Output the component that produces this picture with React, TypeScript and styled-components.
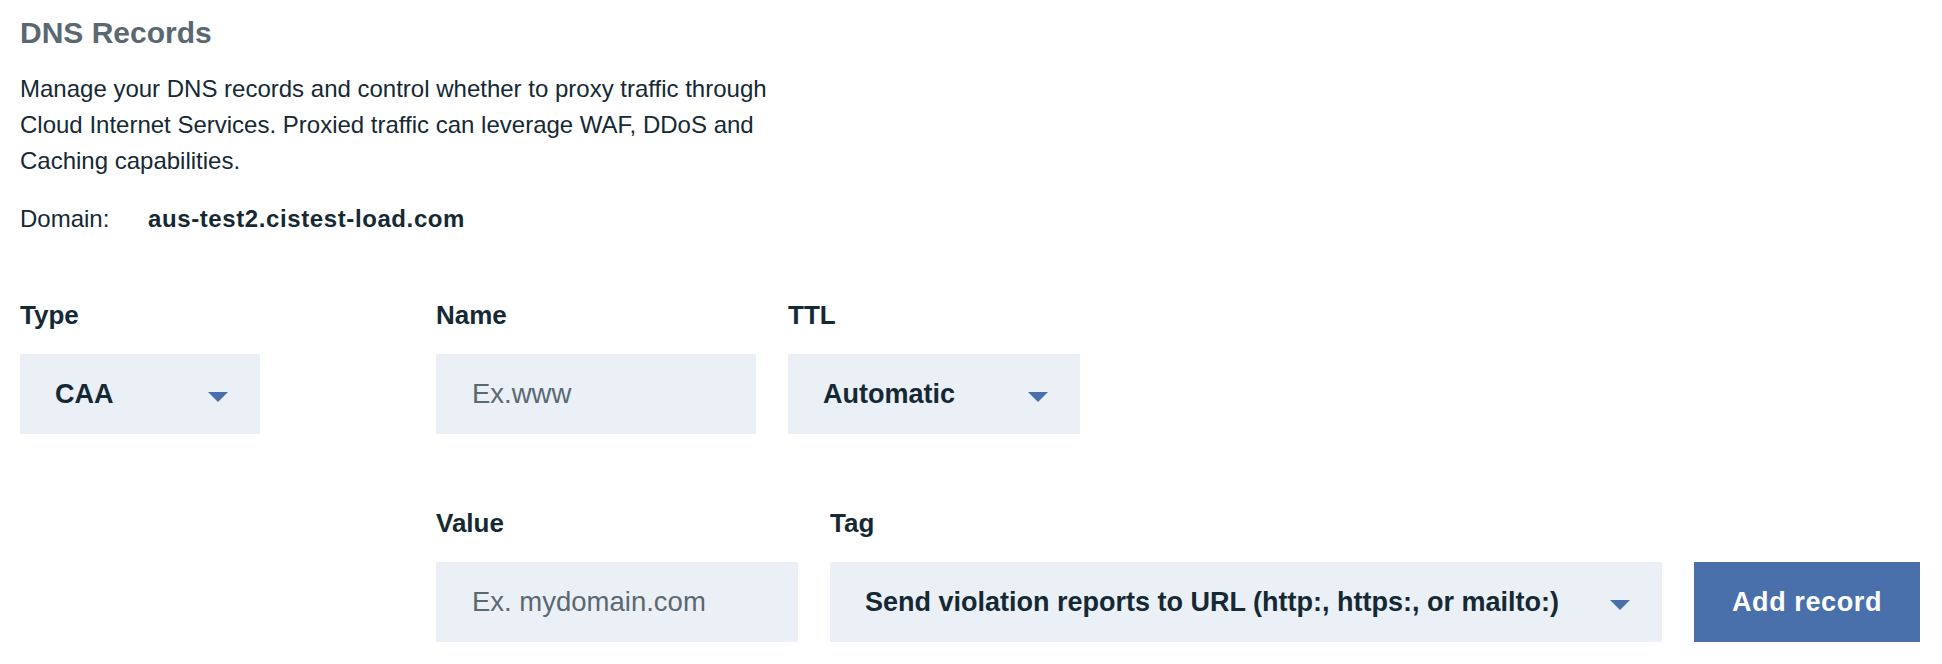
import React from "react";
import styled, { createGlobalStyle } from "styled-components";

const GlobalStyle = createGlobalStyle`
  html, body {
    margin: 0;
    padding: 0;
    background: #ffffff;
  }
  body {
    font-family: "Liberation Sans", Arial, sans-serif;
    color: #152935;
  }
  * { box-sizing: border-box; }
`;

const Page = styled.div`
  padding: 15px 20px 0 20px;
`;

const Title = styled.h2`
  margin: 0;
  font-size: 30px;
  line-height: 36px;
  font-weight: 700;
  color: #5a6872;
`;

const Description = styled.p`
  margin: 20px 0 0 0;
  max-width: 780px;
  font-size: 24px;
  line-height: 36px;
  color: #152935;
`;

const DomainRow = styled.div`
  display: flex;
  margin-top: 22px;
  font-size: 24px;
  line-height: 36px;
`;

const DomainLabel = styled.span`
  width: 128px;
`;

const DomainValue = styled.span`
  font-weight: 700;
  letter-spacing: 0.6px;
`;

const Row = styled.div<{ $top: number; $indent?: number }>`
  display: flex;
  align-items: flex-end;
  gap: 32px;
  margin-top: ${(p) => p.$top}px;
  padding-left: ${(p) => p.$indent ?? 0}px;
`;

const Field = styled.div<{ $width: number; $after?: number }>`
  display: flex;
  flex-direction: column;
  width: ${(p) => p.$width}px;
  margin-right: ${(p) => p.$after ?? 0}px;
`;

const Label = styled.label`
  font-size: 26px;
  line-height: 32px;
  font-weight: 700;
  color: #152935;
  margin-bottom: 23px;
`;

const SelectBox = styled.div`
  display: flex;
  align-items: center;
  justify-content: space-between;
  height: 80px;
  padding: 0 32px 0 35px;
  background: #ebf0f7;
  font-size: 27px;
  font-weight: 700;
  color: #152935;
  white-space: nowrap;
`;

const Caret = styled.svg`
  flex: none;
  margin-top: 6px;
  margin-left: 24px;
`;

const TextInput = styled.input`
  height: 80px;
  width: 100%;
  padding: 0 20px 0 36px;
  border: none;
  outline: none;
  background: #ebf0f7;
  font-family: "Liberation Sans", Arial, sans-serif;
  font-size: 27.5px;
  color: #152935;
  &::placeholder {
    color: #5a6872;
    opacity: 1;
  }
`;

const PrimaryButton = styled.button`
  width: 226px;
  height: 80px;
  border: none;
  background: #4a70ab;
  color: #ffffff;
  font-family: "Liberation Sans", Arial, sans-serif;
  font-size: 27px;
  font-weight: 700;
  letter-spacing: 0.6px;
  cursor: pointer;
`;

const CaretIcon = () => (
  <Caret width="20" height="10" viewBox="0 0 20 10">
    <polygon points="0,0 20,0 10,10" fill="#4a70ab" />
  </Caret>
);

const Select = ({ value }: { value: string }) => (
  <SelectBox>
    <span>{value}</span>
    <CaretIcon />
  </SelectBox>
);

export default function App() {
  return (
    <Page>
      <GlobalStyle />
      <Title>DNS Records</Title>
      <Description>
        Manage your DNS records and control whether to proxy traffic through
        Cloud Internet Services. Proxied traffic can leverage WAF, DDoS and
        Caching capabilities.
      </Description>
      <DomainRow>
        <DomainLabel>Domain:</DomainLabel>
        <DomainValue>aus-test2.cistest-load.com</DomainValue>
      </DomainRow>

      <Row $top={62}>
        <Field $width={240} $after={144}>
          <Label>Type</Label>
          <Select value="CAA" />
        </Field>
        <Field $width={320}>
          <Label>Name</Label>
          <TextInput placeholder="Ex.www" />
        </Field>
        <Field $width={292}>
          <Label>TTL</Label>
          <Select value="Automatic" />
        </Field>
      </Row>

      <Row $top={73} $indent={416}>
        <Field $width={362}>
          <Label>Value</Label>
          <TextInput placeholder="Ex. mydomain.com" />
        </Field>
        <Field $width={832}>
          <Label>Tag</Label>
          <Select value="Send violation reports to URL (http:, https:, or mailto:)" />
        </Field>
        <PrimaryButton>Add record</PrimaryButton>
      </Row>
    </Page>
  );
}
